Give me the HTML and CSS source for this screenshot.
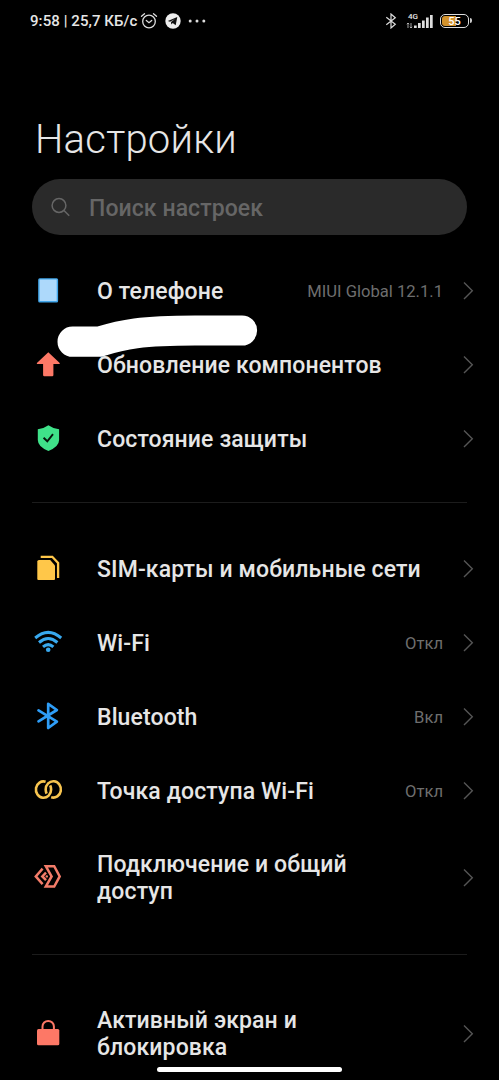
FILE: index.html
```
<!DOCTYPE html>
<html lang="ru">
<head>
    <meta charset="UTF-8">
    <meta name="viewport" content="width=device-width, initial-scale=1">
    <title>Настройки</title>
    <link rel="stylesheet" href="styles.css">
</head>
<body>
    <svg class="sprite" width="0" height="0">
        <symbol id="chevron" viewBox="0 0 12 20">
            <path d="M2 1.5L10.3 9.8L2 18.1" fill="none" stroke="#555" stroke-width="1.4"/>
        </symbol>
    </svg>

    <header class="status-bar">
        <span class="status-text">9:58 | 25,7 КБ/с</span>
        <svg class="status-alarm" width="18" height="18" viewBox="0 0 18 18" fill="none" stroke="#ddd" stroke-width="1.3" stroke-linecap="round">
            <circle cx="9" cy="9.5" r="6.3"/>
            <path d="M1.5 4.3L4.5 1.7M16.5 4.3L13.5 1.7M6.3 8.5L9 10.7L11.7 8.5"/>
        </svg>
        <svg class="status-telegram" width="16" height="16" viewBox="0 0 16 16">
            <circle cx="8" cy="8" r="7.7" fill="#eee"/>
            <path d="M2.8 8L12.3 4L10.7 12.2L7.7 10.1L6.3 11.5L6 9.1L10 6L5 8.8Z" fill="#111"/>
        </svg>
        <svg class="status-more" width="18" height="4" viewBox="0 0 18 4" fill="#ddd">
            <circle cx="2.2" cy="2" r="1.5"/>
            <circle cx="9" cy="2" r="1.5"/>
            <circle cx="15.8" cy="2" r="1.5"/>
        </svg>
        <svg class="status-bt" width="12" height="16" viewBox="0 0 12 16" fill="none" stroke="#ddd" stroke-width="1.2">
            <path d="M1.3 4.3L10.3 11.3L6 15V1L10.3 4.7L1.3 11.7"/>
        </svg>
        <div class="signal">
            <span class="signal-type">4G</span>
            <svg width="27" height="16" viewBox="0 0 27 16">
                <path d="M2 10V15M.8 11.2L2 10L3.2 11.2M5 10V15M3.8 13.8L5 15L6.2 13.8" fill="none" stroke="#ccc" stroke-width=".8"/>
                <path d="M8 12.5h2.7V15H8zM12 10h2.7v5H12zM16 7.5h2.7V15H16zM20 4.5h2.7V15H20zM24 2h2.7v13H24z" fill="#ddd"/>
            </svg>
        </div>
        <div class="battery"><span class="battery-level">55</span></div>
    </header>

    <h1 class="title">Настройки</h1>

    <div class="search">
        <svg width="20" height="20" viewBox="0 0 20 20" fill="none" stroke="#666" stroke-width="1.5">
            <circle cx="8" cy="8.5" r="6.9"/>
            <path d="M13 13.5L18.2 18.8"/>
        </svg>
        <span class="search-hint">Поиск настроек</span>
    </div>

    <main>
        <section class="group">
            <div class="row">
                <svg class="icon" viewBox="0 0 30 30">
                    <rect x="5.9" y="2.9" width="18.5" height="22.8" rx=".8" fill="#add9fb" stroke="#41a6ea" stroke-width="1.4"/>
                </svg>
                <span class="label">О телефоне</span>
                <span class="value">MIUI Global 12.1.1</span>
                <svg class="chevron"><use href="#chevron"/></svg>
            </div>
            <div class="row">
                <svg class="icon" viewBox="0 0 30 30">
                    <path d="M15.3 2.2L26.7 13Q27.2 13.9 26.2 13.9H20.4V25Q20.4 26.2 19.2 26.2H11.3Q10.1 26.2 10.1 25V13.9H4.4Q3.4 13.9 3.9 13Z" fill="#fd7866"/>
                </svg>
                <span class="label">Обновление компонентов</span>
                <svg class="chevron"><use href="#chevron"/></svg>
            </div>
            <div class="row">
                <svg class="icon" viewBox="0 0 30 30">
                    <path d="M15.4 1.2Q20 4.6 26.1 5.2V16Q26.1 22.6 15.4 27Q4.8 22.6 4.8 16V5.2Q10.8 4.6 15.4 1.2Z" fill="#3fe289"/>
                    <path d="M10.6 13.8L14.3 17.3L20 10.2" fill="none" stroke="#06150c" stroke-width="1.9"/>
                </svg>
                <span class="label">Состояние защиты</span>
                <svg class="chevron"><use href="#chevron"/></svg>
            </div>
            <!-- закрашенное имя -->
            <svg class="scribble" width="201" height="43" viewBox="0 0 201 43">
                <path d="M15.6 26.7H42C66 19.5 84 15.5 138 15.5H185" fill="none" stroke="#fff" stroke-width="30.2" stroke-linecap="round" stroke-linejoin="round"/>
            </svg>
        </section>

        <hr class="divider">

        <section class="group">
            <div class="row">
                <svg class="icon" viewBox="0 0 30 30">
                    <path d="M6 6H17.2L22 11.4V25Q22 26 21 26H5.3Q4.3 26 4.3 25V7.6Q4.3 6 6 6Z" fill="#ffc749"/>
                    <path d="M7.7 2.8H19.3L25.1 9V24" fill="none" stroke="#ffc749" stroke-width="2.3"/>
                </svg>
                <span class="label">SIM-карты и мобильные сети</span>
                <svg class="chevron"><use href="#chevron"/></svg>
            </div>
            <div class="row">
                <svg class="icon" viewBox="0 0 30 30">
                    <g fill="none" stroke="#38a9ef" stroke-width="3">
                        <path d="M2.2 10Q15.2-1.2 28.2 10"/>
                        <path d="M6 14.5Q15.2 6.5 24.4 14.5"/>
                        <path d="M10 18.9Q15.2 14.3 20.4 18.9"/>
                    </g>
                    <circle cx="15.2" cy="21.8" r="2.3" fill="#38a9ef"/>
                </svg>
                <span class="label">Wi-Fi</span>
                <span class="value">Откл</span>
                <svg class="chevron"><use href="#chevron"/></svg>
            </div>
            <div class="row">
                <svg class="icon" viewBox="0 0 30 30">
                    <path d="M5.5 8.4L23.9 19.6L15.2 26V1.8L23.9 8L5.5 19.4" fill="none" stroke="#2e9df7" stroke-width="2.7" stroke-linejoin="round" stroke-linecap="round"/>
                </svg>
                <span class="label">Bluetooth</span>
                <span class="value">Вкл</span>
                <svg class="chevron"><use href="#chevron"/></svg>
            </div>
            <div class="row">
                <svg class="icon" viewBox="0 0 30 30">
                    <g fill="none" stroke="#f7c44f" stroke-width="2.6">
                        <path d="M12.6 5.7A7.6 8.2 0 1 0 18.1 13.5Q18.1 11.3 17.2 9.4"/>
                        <path d="M18.2 21.3A7.6 8.2 0 1 0 12.7 13.5Q12.7 15.7 13.6 17.6"/>
                    </g>
                </svg>
                <span class="label">Точка доступа Wi-Fi</span>
                <span class="value">Откл</span>
                <svg class="chevron"><use href="#chevron"/></svg>
            </div>
            <div class="row row-tall">
                <svg class="icon" viewBox="0 0 30 30">
                    <g fill="none" stroke="#f37c69" stroke-width="2.5">
                        <path d="M9.6 5.7L2.8 13.4L9.6 21.1"/>
                        <path d="M13 9.6L9.3 13.4L13 17.2"/>
                        <path d="M12.8 3.2H21.2L26.7 13.4L21.2 23.6H12.8L18.6 13.4Z"/>
                    </g>
                    <circle cx="13.8" cy="13.4" r="1.2" fill="#f37c69"/>
                </svg>
                <span class="label">Подключение и общий<br>доступ</span>
                <svg class="chevron"><use href="#chevron"/></svg>
            </div>
        </section>

        <hr class="divider">

        <section class="group">
            <div class="row row-tall">
                <svg class="icon" viewBox="0 0 30 30">
                    <rect x="4" y="10" width="22.3" height="16.2" rx="1.5" fill="#fd7866"/>
                    <path d="M9.5 11V7.6A5.7 5.7 0 0 1 20.9 7.6V11" fill="none" stroke="#fd7866" stroke-width="2"/>
                </svg>
                <span class="label">Активный экран и<br>блокировка</span>
                <svg class="chevron"><use href="#chevron"/></svg>
            </div>
        </section>
    </main>

    <div class="home-bar"></div>
</body>
</html>
```
FILE: styles.css
```
* {
    box-sizing: border-box;
}

body {
    margin: 0;
    height: 1080px;
    overflow: hidden;
    background: #000;
    color: #e6e6e6;
    font-family: Roboto, "Noto Sans", sans-serif;
}

.sprite {
    position: absolute;
}

/* строка состояния */
.status-bar {
    display: flex;
    align-items: center;
    height: 41px;
    padding: 0 30px 0 30px;
}

.status-text {
    width: 108px;
    font-size: 15px;
    font-weight: 500;
    letter-spacing: 0.08px;
    white-space: nowrap;
}

.status-alarm {
    margin-left: 2px;
}

.status-telegram {
    margin-left: 7px;
}

.status-more {
    margin-left: 7px;
}

.status-bt {
    margin-left: auto;
}

.signal {
    position: relative;
    height: 16px;
    margin-left: 9px;
}

.signal svg {
    display: block;
}

.signal-type {
    position: absolute;
    left: 2px;
    top: -1px;
    font-size: 8px;
    line-height: 9px;
    font-weight: 500;
}

.battery {
    position: relative;
    width: 29px;
    height: 14px;
    margin-left: 7px;
    padding: 1px;
    border: 1.5px solid #ddd;
    border-radius: 5px;
    background: linear-gradient(90deg, #d2922c 55%, #000 55%) content-box;
    text-align: center;
}

.battery::after {
    content: "";
    position: absolute;
    right: -4px;
    top: 3px;
    width: 2px;
    height: 5px;
    border-radius: 0 2px 2px 0;
    background: #ccc;
}

.battery-level {
    display: block;
    font-size: 11px;
    line-height: 11px;
    font-weight: 500;
    color: #fff;
}

.title {
    margin: 76px 0 0 35px;
    font-size: 40px;
    line-height: 46px;
    font-weight: 300;
    letter-spacing: 0.25px;
}

.search {
    display: flex;
    align-items: center;
    height: 56px;
    margin: 16px 32px 19px;
    padding-left: 19px;
    border-radius: 28px;
    background: #2a2a2a;
}

.search-hint {
    margin-left: 18px;
    padding-top: 2px;
    font-size: 23px;
    font-weight: 500;
    letter-spacing: 0.08px;
    color: #666;
}

/* список */
.group {
    position: relative;
}

.row {
    display: flex;
    align-items: center;
    height: 74px;
    padding: 0 25px 0 33px;
}

.row-tall {
    height: 100px;
}

.icon {
    flex: none;
    width: 30px;
    height: 30px;
    margin-right: 34px;
}

.label {
    flex: 1;
    font-size: 23px;
    line-height: 27px;
    font-weight: 500;
    letter-spacing: 0.12px;
    white-space: nowrap;
}

.value {
    font-size: 16.6px;
    color: #6e6e6e;
}

.chevron {
    flex: none;
    width: 12px;
    height: 20px;
    margin-left: 19px;
}

.divider {
    height: 1px;
    margin: 26px 32px 29px;
    border: 0;
    background: #1c1c1c;
}

.scribble {
    position: absolute;
    left: 57px;
    top: 61px;
}

.home-bar {
    position: absolute;
    left: 157px;
    top: 1067px;
    width: 185px;
    height: 5px;
    border-radius: 3px;
    background: #fff;
}
```
